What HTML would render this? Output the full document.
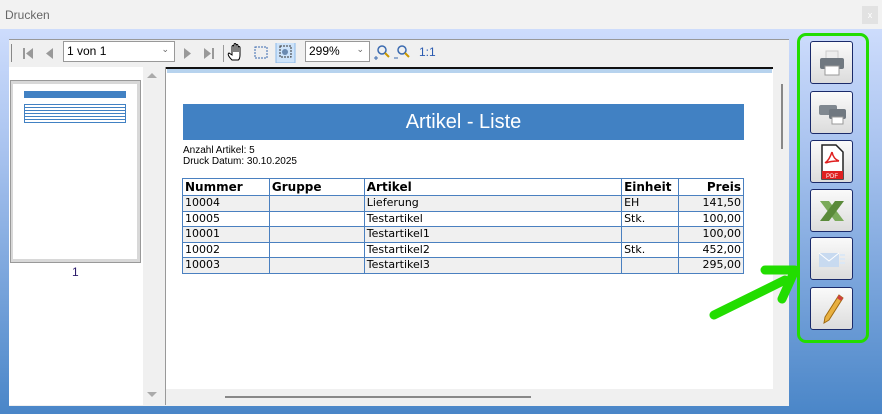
<!DOCTYPE html>
<html><head><style>
*{margin:0;padding:0;box-sizing:border-box}
body{width:882px;height:414px;overflow:hidden;font-family:"Liberation Sans",sans-serif;background:linear-gradient(#cddcfc 0px,#cddcfc 30px,#a9c3ef 150px,#4a86c8 414px);position:relative}
.a{position:absolute}
.btn{position:absolute;left:810px;width:43px;height:43px;border:1px solid #1a2a6a;border-radius:3px;background:linear-gradient(#fafafa,#dcdcdc);display:flex;align-items:center;justify-content:center}
table{border-collapse:collapse;font-size:11px;font-family:"DejaVu Sans","Liberation Sans",sans-serif}
td{border:1px solid #4a80c0;height:15.5px;padding:0 2px;line-height:14px;color:#000}
tr:first-child td{font-size:12px;height:17px}
tr:nth-child(even) td{background:#f0f0f0}
</style></head><body>
<div class="a" style="left:0;top:0;width:882px;height:29px;background:#f2f2f2"></div>
<div class="a" style="left:5px;top:8px;font-size:12px;color:#666">Drucken</div>
<div class="a" style="left:862px;top:6px;width:16px;height:18px;background:#e2e2e2;color:#fff;font-size:9px;text-align:center;line-height:18px">x</div>
<div class="a" style="left:9px;top:39px;width:780px;height:367px;background:#f0f0f0;border-top:1px solid #999"></div>
<div class="a" style="left:11px;top:44px;width:1px;height:18px;background:#888"></div>
<svg class="a" style="left:20px;top:43px" width="200" height="20">
<rect x="3" y="5" width="2" height="11" fill="#999"/><path d="M13 5v11l-7-5.5z" fill="#999"/>
<path d="M33 5v11l-7-5.5z" fill="#999"/>
</svg>
<div class="a" style="left:63px;top:41px;width:112px;height:21px;background:#fff;border:1px solid #999;font-size:12px;padding:2px 3px">1 von 1<span style="position:absolute;right:5px;top:2px;color:#666;font-size:9px">&#8964;</span></div>
<svg class="a" style="left:180px;top:43px" width="280" height="20">
<path d="M4 5v11l7-5.5z" fill="#999"/><path d="M24 5v11l7-5.5z" fill="#999"/><rect x="32" y="5" width="2" height="11" fill="#999"/>
<rect x="43" y="2" width="1" height="17" fill="#999"/>
<path d="M52 17c-3-3-5-6-3-7l3 2v-8c0-2 2-2 2 0v5-7c0-2 2-2 2 0v7-6c0-2 2-2 2 0v6-4c0-2 2-2 2 0v7c0 3-1 5-2 5z" fill="#fff" stroke="#000" stroke-width="1"/>
<rect x="75" y="4" width="12" height="11" fill="none" stroke="#3a6ab0" stroke-dasharray="2 1"/>
<rect x="96" y="-2" width="19" height="22" fill="#cde3fa" stroke="#8ab8e8"/>
<rect x="100" y="3" width="11" height="11" fill="none" stroke="#333" stroke-dasharray="2 1"/><circle cx="105" cy="9" r="3" fill="#6a8ab0"/>
</svg>
<div class="a" style="left:305px;top:41px;width:65px;height:21px;background:#fff;border:1px solid #999;font-size:12px;padding:2px 3px">299%<span style="position:absolute;right:5px;top:2px;color:#666;font-size:9px">&#8964;</span></div>
<svg class="a" style="left:372px;top:43px" width="40" height="20">
<circle cx="10" cy="7" r="4" fill="none" stroke="#3a6ab0" stroke-width="1.5"/><path d="M13 10l4 4" stroke="#c90" stroke-width="2"/><path d="M2 15h4M4 13v4" stroke="#3a6ab0"/>
<circle cx="30" cy="7" r="4" fill="none" stroke="#3a6ab0" stroke-width="1.5"/><path d="M33 10l4 4" stroke="#c90" stroke-width="2"/><path d="M22 15h4" stroke="#3a6ab0"/>
</svg>
<div class="a" style="left:419px;top:45px;font-size:12px;color:#2a5ab0">1:1</div>
<div class="a" style="left:9px;top:67px;width:134px;height:338px;background:#fff"></div>
<div class="a" style="left:10px;top:80px;width:131px;height:183px;background:#d8d8d8;border:1px solid #999"></div>
<div class="a" style="left:13px;top:84px;width:124px;height:175px;background:#fff"></div>
<div class="a" style="left:24px;top:91px;width:102px;height:7px;background:#4181c3"></div>
<div class="a" style="left:24px;top:104px;width:102px;height:19px;border:1px solid #4181c3;background:repeating-linear-gradient(#fff 0,#fff 2px,#4181c3 2px,#4181c3 3px)"></div>
<div class="a" style="left:72px;top:265px;font-size:12px;color:#2a1a6a">1</div>
<div class="a" style="left:143px;top:67px;width:17px;height:338px;background:#f0f0f0"></div>
<svg class="a" style="left:145px;top:70px" width="14" height="335"><path d="M2 8l5-5 5 5z" fill="#aaa"/><path d="M2 322l5 5 5-5z" fill="#aaa"/></svg>
<div class="a" style="left:165px;top:67px;width:1px;height:338px;background:#999"></div>
<div class="a" style="left:166px;top:67px;width:607px;height:322px;background:#fff;border-top:2px solid #111"></div>
<div class="a" style="left:167px;top:69px;width:605px;height:4px;background:#b7d3ee"></div>
<div class="a" style="left:781px;top:84px;width:2px;height:65px;background:#888"></div>
<div class="a" style="left:225px;top:396px;width:306px;height:2px;background:#888"></div>
<div class="a" style="left:183px;top:104px;width:561px;height:36px;background:#4181c3;color:#fff;font-size:20px;text-align:center;line-height:36px">Artikel - Liste</div>
<div class="a" style="left:183px;top:145px;font-size:10px;line-height:11px;color:#000">Anzahl Artikel: 5<br>Druck Datum: 30.10.2025</div>
<table class="a" style="left:182px;top:178px;width:562px">
<colgroup><col style="width:87px"><col style="width:95px"><col style="width:258px"><col style="width:57px"><col style="width:65px"></colgroup>
<tr><td><b>Nummer</b></td><td><b>Gruppe</b></td><td><b>Artikel</b></td><td><b>Einheit</b></td><td style="text-align:right"><b>Preis</b></td></tr>
<tr><td>10004</td><td></td><td>Lieferung</td><td>EH</td><td style="text-align:right">141,50</td></tr>
<tr><td>10005</td><td></td><td>Testartikel</td><td>Stk.</td><td style="text-align:right">100,00</td></tr>
<tr><td>10001</td><td></td><td>Testartikel1</td><td></td><td style="text-align:right">100,00</td></tr>
<tr><td>10002</td><td></td><td>Testartikel2</td><td>Stk.</td><td style="text-align:right">452,00</td></tr>
<tr><td>10003</td><td></td><td>Testartikel3</td><td></td><td style="text-align:right">295,00</td></tr>
</table>
<div class="a" style="left:797px;top:33px;width:72px;height:310px;border:3px solid #22dd00;border-radius:9px"></div>
<div class="btn" style="top:41px"><svg width="30" height="28"><rect x="9" y="2" width="12" height="8" fill="#eee" stroke="#ccc"/><rect x="3" y="9" width="24" height="11" rx="2" fill="#707880"/><rect x="8" y="17" width="14" height="9" fill="#fff" stroke="#999"/></svg></div>
<div class="btn" style="top:91px"><svg width="30" height="28"><rect x="2" y="6" width="18" height="10" rx="2" fill="#808890"/><rect x="12" y="10" width="17" height="10" rx="2" fill="#707880"/><rect x="15" y="18" width="11" height="7" fill="#fff" stroke="#999"/></svg></div>
<div class="btn" style="top:140px"><svg width="26" height="36"><path d="M3 1h14l7 7v27H3z" fill="#fff" stroke="#222" stroke-width="1.5"/><rect x="3" y="27" width="21" height="8" fill="#e02020"/><text x="7" y="34" font-size="6" fill="#fff" font-family="Liberation Sans">PDF</text><path d="M13 8c-2 6-4 9-7 11M13 8c1 5 4 8 7 9M7 19c4-2 9-2 13-2" stroke="#e02020" fill="none" stroke-width="1.5"/></svg></div>
<div class="btn" style="top:189px"><svg width="30" height="26"><path d="M3 3h9l15 20h-9z" fill="#7aaa5a"/><path d="M27 3h-9L3 23h9z" fill="#5a8a3a"/></svg></div>
<div class="btn" style="top:237px"><svg width="30" height="24"><path d="M2 6h20v14H2z" fill="#c8daf0"/><path d="M2 6l10 8 10-8" stroke="#fff" fill="none"/><path d="M23 8h5M23 12h5M23 16h5" stroke="#dce8f5" stroke-width="2"/></svg></div>
<div class="btn" style="top:287px"><svg width="30" height="34"><path d="M22 3l4 3-14 22-5 3 1-6z" fill="#e8b040" stroke="#a06a10"/><path d="M22 3l4 3-2 3-4-3z" fill="#d04040"/></svg></div>
<svg class="a" style="left:700px;top:255px" width="110" height="80"><path d="M14 60L85 25" stroke="#22dd00" stroke-width="9" stroke-linecap="round"/><path d="M65 15L95 15 82 44" stroke="#22dd00" stroke-width="9" fill="none" stroke-linecap="round" stroke-linejoin="round"/></svg>
</body></html>
